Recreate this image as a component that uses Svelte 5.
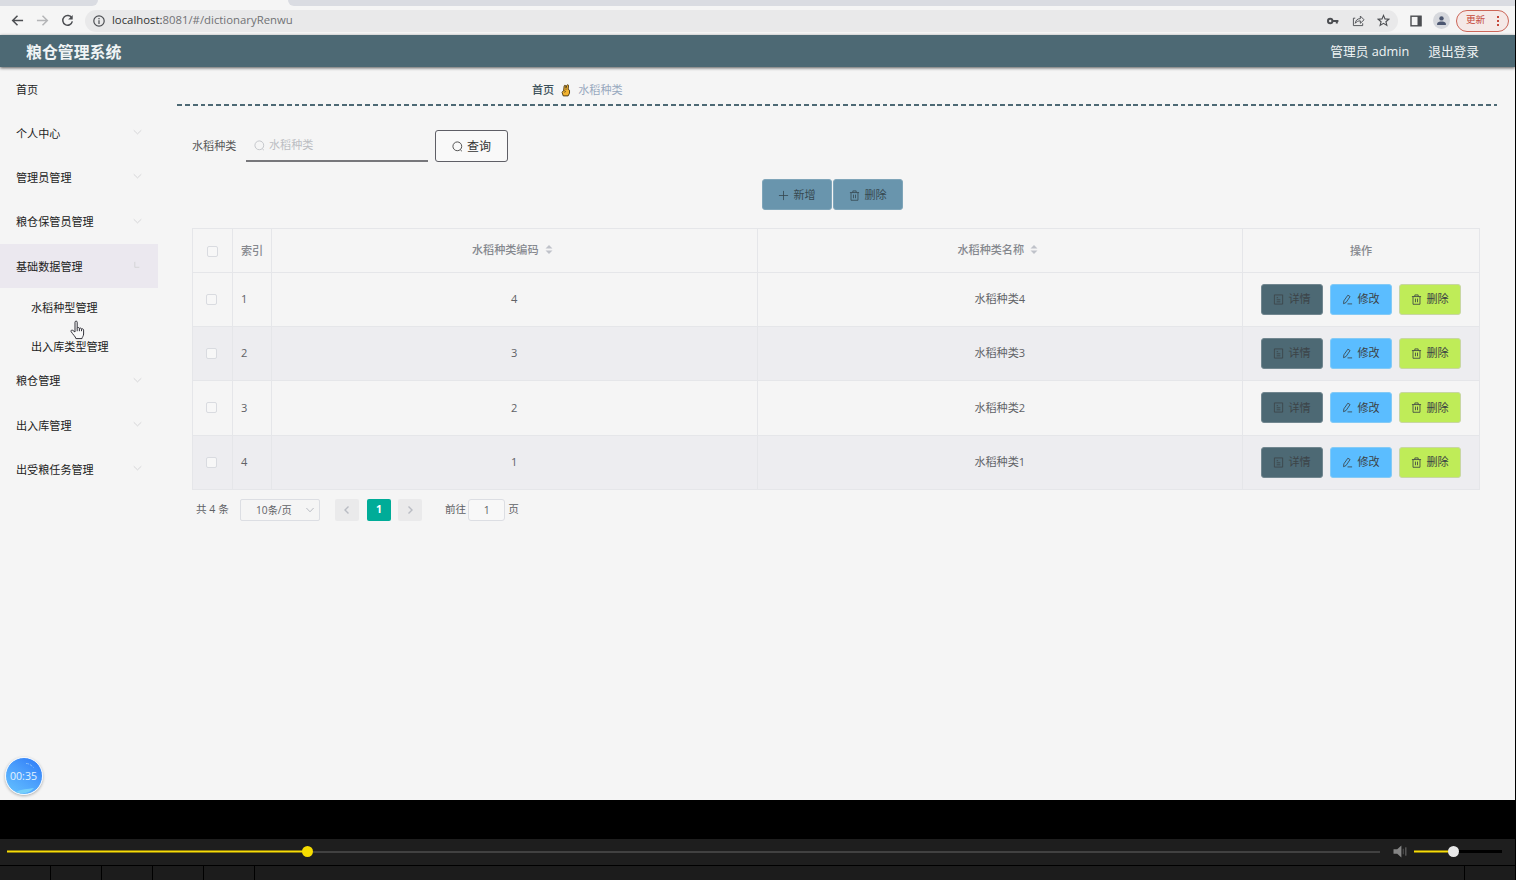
<script lang="ts">
  type MenuItem = { title: string; children?: string[]; leaf?: boolean };

  const menus: MenuItem[] = [
    { title: '首页', leaf: true },
    { title: '个人中心' },
    { title: '管理员管理' },
    { title: '粮仓保管员管理' },
    { title: '基础数据管理', children: ['水稻种型管理', '出入库类型管理'] },
    { title: '粮仓管理' },
    { title: '出入库管理' },
    { title: '出受粮任务管理' }
  ];

  const rows = [
    { code: 4, name: '水稻种类4' },
    { code: 3, name: '水稻种类3' },
    { code: 2, name: '水稻种类2' },
    { code: 1, name: '水稻种类1' }
  ];

  let active = $state('基础数据管理');
  let keyword = $state('');
  let jumpPage = $state('1');
</script>

{#snippet trash()}
  <svg class="icon" viewBox="0 0 12 12"><path d="M1 2.8h10M4.2 2.8V1h3.6v1.8M2.2 2.8v8.4h7.6V2.8M4.9 5v4M7.1 5v4" /></svg>
{/snippet}

{#snippet search()}
  <svg class="icon" viewBox="0 0 12 12"><circle cx="5.8" cy="5.8" r="4.8" /><path d="M9 9.5l1.8 1.6" /></svg>
{/snippet}

<div class="screen">
  <div class="page">
    <div class="tabs">
      <div class="tab left"></div>
      <div class="tab right"></div>
    </div>
    <div class="toolbar">
      <svg class="nav" viewBox="0 0 14 14"><path d="M13 7H2M7 1.8L1.8 7L7 12.2" /></svg>
      <svg class="nav dim" viewBox="0 0 14 14"><path d="M1 7h11M7 1.8L12.2 7L7 12.2" /></svg>
      <svg class="nav" viewBox="0 0 14 14"><path d="M11.6 4.2A5.2 5.2 0 1 0 12.2 8" /><path class="fill" d="M12.6 1v5H7.7z" /></svg>
      <div class="address">
        <svg class="info" viewBox="0 0 12 12"><circle cx="6" cy="6" r="5.2" /><path d="M6 5.3v3.6M6 2.9v1.3" /></svg>
        <span class="url"><b>localhost:</b>8081/#/dictionaryRenwu</span>
        <svg class="key" viewBox="0 0 12 12"><circle cx="3.2" cy="6" r="2.2" /><path d="M5.4 6h6M9.8 6v2.6" /></svg>
        <svg class="share" viewBox="0 0 14 14"><path d="M3.5 4.5H1.5v8h10V10M3.5 10c.5-3.5 2.5-5 5.500-5V2.200l4 4-4 3.800V7.400c-2.400 0-4 .6-5.500 2.600z" /></svg>
        <svg class="star" viewBox="0 0 14 14"><path d="M7 1.5l1.600 3.800 4.100.3-3.100 2.700 1 4L7 10.100l-3.600 2.200 1-4-3.100-2.700 4.100-.3z" /></svg>
      </div>
      <svg class="panel" viewBox="0 0 12 12"><rect x="1" y="1.2" width="10" height="9.6" /><path class="fill" d="M7.5 1h3.8v10H7.5z" /></svg>
      <div class="avatar">
        <svg viewBox="0 0 12 12"><circle cx="6" cy="3.7" r="2.4" /><path d="M1.2 10.8V9.6C1.2 7.8 4 7.2 6 7.2s4.8.6 4.8 2.4v1.2z" /></svg>
      </div>
      <div class="update"><span>更新</span><i></i></div>
    </div>

    <header>
      <h1>粮仓管理系统</h1>
      <span class="user">管理员 admin</span>
      <span class="logout">退出登录</span>
    </header>

    <div class="body">
      <aside>
        {#each menus as menu}
          <div class="menu" class:active={menu.title === active}>
            <span>{menu.title}</span>
            {#if menu.title === active}
              <svg class="caret" viewBox="0 0 10 10"><path d="M2 1v6h5" /></svg>
            {:else if !menu.leaf}
              <svg class="caret" viewBox="0 0 10 10"><path d="M.8 2.500L5 6.500l4.200-4" /></svg>
            {/if}
          </div>
          {#if menu.children}
            <div class="submenu">
              {#each menu.children as child}
                <div class="sub">{child}</div>
              {/each}
            </div>
          {/if}
        {/each}
      </aside>

      <main>
        <div class="breadcrumb">
          <span class="home">首页</span>
          <svg viewBox="0 0 12 14"><path d="M3 12.800L1.800 9 3.500 6.800 4 2.200c.2-1.200 1.600-1.200 1.700 0l.3 2 .9-2.800c.4-1 2-.7 1.800.5L8.300 5.800l1.500.9v3.100l-1.500 3z" /><path class="line" d="M3.600 7l2 1-1.200 1.400M6 4.500v2" /></svg>
          <span class="current">水稻种类</span>
        </div>

        <div class="filter">
          <label for="kw">水稻种类</label>
          <div class="field">
            {@render search()}
            <input id="kw" placeholder="水稻种类" bind:value={keyword} />
          </div>
          <button class="query">{@render search()}<span>查询</span></button>
        </div>

        <div class="actions">
          <button><svg class="icon" viewBox="0 0 12 12"><path d="M6 1v10M1 6h10" /></svg><span>新增</span></button>
          <button>{@render trash()}<span>删除</span></button>
        </div>

        <table>
          <colgroup>
            <col class="c-check" /><col class="c-index" /><col /><col /><col class="c-ops" />
          </colgroup>
          <thead>
            <tr>
              <th class="check"><i class="box"></i></th>
              <th class="index">索引</th>
              {#each ['水稻种类编码', '水稻种类名称'] as label}
                <th><div class="sortable">{label}<svg viewBox="0 0 8 12"><path d="M4 1l3.8 4H.2zM4 11L.2 7h7.6z" /></svg></div></th>
              {/each}
              <th>操作</th>
            </tr>
          </thead>
          <tbody>
            {#each rows as row, i}
              <tr>
                <td class="check"><i class="box"></i></td>
                <td class="index">{i + 1}</td>
                <td>{row.code}</td>
                <td>{row.name}</td>
                <td>
                  <div class="ops">
                    <button class="detail"><svg class="icon" viewBox="0 0 12 12"><path d="M1.5 1h9v10h-9zM4 4h1.5M4 6.3h4M4 8.5h4" /></svg><span>详情</span></button>
                    <button class="edit"><svg class="icon" viewBox="0 0 12 12"><path d="M2 7.5L6.4 1.3l2.4 1.5L4.4 9.3l-2.7 1.3zM6 10.8h5" /></svg><span>修改</span></button>
                    <button class="remove">{@render trash()}<span>删除</span></button>
                  </div>
                </td>
              </tr>
            {/each}
          </tbody>
        </table>

        <div class="pagination">
          <span class="total">共 4 条</span>
          <div class="sizes">10条/页<svg viewBox="0 0 10 10"><path d="M1.4 3L5 6.8 8.6 3" /></svg></div>
          <button class="arrow"><svg viewBox="0 0 10 10"><path d="M6.5 1.5L3 5l3.5 3.5" /></svg></button>
          <button class="num">1</button>
          <button class="arrow"><svg viewBox="0 0 10 10"><path d="M3.5 1.5L7 5 3.5 8.5" /></svg></button>
          <span class="jump">前往</span>
          <input bind:value={jumpPage} />
          <span>页</span>
        </div>
      </main>
    </div>

    <svg class="pointer" viewBox="0 0 15 20"><path d="M5 12V2.2C5 .7 7.2.7 7.2 2.2v6c.2-1 2.1-.9 2.2.3.4-.8 2-.6 2.1.6.5-.7 2.1-.3 2.1 1V14c0 2-1.4 3-1.6 4.6H5.9C5.6 16.6 2.6 14.2 1.1 11.6c-.6-1.2.8-2 1.7-1.2z" /><path d="M7.2 8.2v3M9.4 8.5v2.7M11.5 9.2v2" /></svg>

    <div class="timer">
      <svg viewBox="0 0 36 36"><path class="wave" d="M10 34c5-3 12-3 18-4-4 5-12 7-18 4z" /><path class="glint" d="M20 5.5c3 0 5 1.500 7.500 4" /></svg>
      <span>00:35</span>
    </div>
  </div>

  <div class="player">
    <div class="progress"><div class="played"></div><i class="knob"></i></div>
    <svg class="speaker" viewBox="0 0 14 14"><path class="cone" d="M0 4.5h4L8.5.5v13L4 9.5H0z" /><path d="M10.5 4v6" /><path class="far" d="M13.3 2.5v9" /></svg>
    <div class="volume"><div class="level"></div><i class="knob"></i></div>
  </div>
  <div class="strip">
    {#each Array(5) as _}
      <i></i>
    {/each}
    <i class="last"></i>
  </div>
</div>

<style>
  :global(body) {
    margin: 0;
    background: #000;
  }

  * {
    box-sizing: border-box;
  }

  .screen {
    width: 1516px;
    height: 880px;
    padding-right: 1px;
    overflow: hidden;
    background: #000;
    color: #606266;
    font: 11.1px/1.3 'Open Sans', 'Noto Sans CJK SC', sans-serif;
  }

  svg {
    display: block;
    flex: none;
    fill: none;
    stroke: currentColor;
    stroke-width: 1;
  }

  button,
  input {
    margin: 0;
    padding: 0;
    border: 0;
    color: inherit;
    font: inherit;
  }

  .page {
    position: relative;
    height: 800px;
    background: #f5f5f5;
  }

  /* browser chrome */
  .tabs {
    display: flex;
    justify-content: space-between;
    height: 6px;
  }

  .tab {
    background: #dadce2;
  }

  .left {
    width: 98px;
    border-bottom-right-radius: 6px;
  }

  .right {
    width: 1227px;
    border-bottom-left-radius: 6px;
  }

  .toolbar {
    display: flex;
    align-items: center;
    height: 29px;
    padding: 0 6px 0 11px;
    color: #4c4e52;
  }

  .nav {
    width: 13px;
    height: 13px;
    margin-right: 12px;
    stroke-width: 1.6;
  }

  .dim {
    color: #b4b5b7;
  }

  .fill {
    fill: currentColor;
    stroke: none;
  }

  .address {
    display: flex;
    flex: 1;
    align-items: center;
    height: 22px;
    margin: 0 12px 0 -1px;
    padding: 0 8px;
    border-radius: 11px;
    background: #e9e9ea;
  }

  .info {
    width: 12px;
    height: 12px;
    margin-right: 7px;
    stroke-width: 1.2;
  }

  .url {
    flex: 1;
    color: #717275;
    font-size: 11.35px;
  }

  .url b {
    color: #333;
    font-weight: 400;
  }

  .key {
    width: 12px;
    height: 12px;
    margin-right: 13px;
    stroke-width: 2;
  }

  .share,
  .star {
    width: 13px;
    height: 13px;
  }

  .share {
    margin-right: 12px;
  }

  .star {
    stroke-width: 1.2;
  }

  .panel {
    width: 12px;
    height: 12px;
    margin-right: 11px;
    stroke-width: 1.4;
  }

  .avatar {
    display: grid;
    place-items: center;
    width: 17px;
    height: 17px;
    margin-right: 6px;
    border-radius: 50%;
    background: #d6d8dd;
    color: #4b5670;
  }

  .avatar svg {
    width: 11px;
    height: 11px;
    fill: currentColor;
    stroke: none;
  }

  .update {
    display: flex;
    align-items: center;
    justify-content: space-between;
    width: 53px;
    height: 22px;
    padding: 0 9px;
    border: 1px solid #cc6658;
    border-radius: 11px;
    background: #f5e9e7;
    color: #c5483a;
    font-size: 9.6px;
  }

  .update i {
    width: 2px;
    height: 2px;
    background: #c5483a;
    box-shadow: 0 -4px #c5483a, 0 4px #c5483a;
  }

  header {
    position: relative;
    display: flex;
    align-items: center;
    height: 32px;
    padding: 0 36px 0 26px;
    background: #4d6974;
    box-shadow: 0 1px 3px rgba(0, 0, 0, 0.65);
    color: #f0f4f5;
    font-size: 12.7px;
  }

  h1 {
    flex: 1;
    margin: 0;
    padding-top: 2px;
    font-size: 15.9px;
    font-weight: 700;
  }

  .user {
    margin-right: 19px;
  }

  .body {
    display: flex;
  }

  /* side menu */
  aside {
    flex: none;
    width: 158px;
    color: #222;
  }

  .menu {
    display: flex;
    align-items: center;
    justify-content: space-between;
    height: 44.2px;
    padding: 2px 16px 0;
  }

  .menu.active {
    background: #ebe8ef;
  }

  .caret {
    width: 9px;
    height: 9px;
    margin-bottom: 3px;
    color: #d2d2d5;
  }

  .submenu {
    height: 70.6px;
  }

  .sub {
    height: 39.5px;
    padding-left: 31px;
    line-height: 40px;
  }

  /* content */
  main {
    flex: 1;
    min-width: 0;
    padding: 0 35px 0 34px;
  }

  .breadcrumb {
    display: flex;
    align-items: center;
    width: 1320px;
    height: 39px;
    margin-left: -15px;
    padding: 7px 0 0 355px;
    background: repeating-linear-gradient(90deg, #4d6974 0 4.9px, transparent 4.9px 7.84px) left bottom / 100% 2px no-repeat;
  }

  .home {
    color: #3c505a;
    font-weight: 500;
  }

  .breadcrumb svg {
    width: 12px;
    height: 13px;
    margin: 0 6px;
    fill: #f3b32f;
    stroke: #493814;
  }

  .breadcrumb .line {
    fill: none;
    stroke-width: 0.7;
  }

  .current {
    color: #97a8be;
  }

  .filter {
    display: flex;
    align-items: center;
    height: 32px;
    margin-top: 24px;
  }

  label {
    width: 54px;
    color: #555;
  }

  .field {
    display: flex;
    align-items: center;
    width: 182px;
    height: 32px;
    margin-right: 7px;
    padding: 0 8px;
    border-bottom: 2px solid #77777b;
    color: #bbbdc2;
  }

  .field input {
    width: 140px;
    margin-left: 4px;
    outline: 0;
    background: transparent;
  }

  input::placeholder {
    color: #bbbdc2;
    opacity: 1;
  }

  .icon {
    width: 11px;
    height: 11px;
    stroke-width: 0.9;
  }

  .query {
    display: flex;
    align-items: center;
    justify-content: center;
    gap: 4px;
    width: 73px;
    height: 32px;
    padding-top: 1px;
    border: 1px solid #5f5f66;
    border-radius: 3px;
    background: #f9f9f9;
    color: #333;
    font-size: 12px;
  }

  .actions {
    display: flex;
    justify-content: center;
    gap: 1px;
    margin: 17px 0 18px;
    padding-right: 7px;
  }

  .actions button,
  .ops button {
    display: flex;
    align-items: center;
    justify-content: center;
    gap: 4px;
    height: 31px;
    border-radius: 3px;
  }

  .actions button {
    width: 70px;
    padding-top: 1px;
    border: 1px solid #7fa5b9;
    background: #6995ad;
    color: #374951;
  }

  table {
    width: 1288px;
    border: 1px solid #e5e6e9;
    border-width: 1px 0 0 1px;
    border-spacing: 0;
    table-layout: fixed;
  }

  .c-check {
    width: 40px;
  }

  .c-index {
    width: 39px;
  }

  .c-ops {
    width: 237px;
  }

  th,
  td {
    padding: 0;
    border: 1px solid #e5e6e9;
    border-width: 0 1px 1px 0;
    text-align: center;
  }

  th {
    height: 43.5px;
    padding-top: 2px;
    color: #85888e;
    font-weight: 500;
  }

  td {
    height: 54.35px;
  }

  tbody tr:nth-child(even) {
    background: #ededf0;
  }

  td.check {
    padding-right: 3px;
  }

  .index {
    padding-left: 8px;
    text-align: left;
  }

  .box {
    display: block;
    width: 11px;
    height: 11px;
    margin: 0 auto;
    border: 1px solid #d9dbe0;
    border-radius: 2px;
    background: #f7f7f7;
  }

  .sortable {
    display: flex;
    align-items: center;
    justify-content: center;
    gap: 6px;
    padding-bottom: 3px;
    padding-right: 4px;
  }

  .sortable svg {
    width: 8px;
    height: 11px;
    fill: #bfc2c9;
    stroke: none;
  }

  .ops {
    display: flex;
    justify-content: center;
    gap: 7px;
  }

  .ops button {
    width: 62px;
    border: 1px solid #d8dde0;
    color: #3b4144;
  }

  .ops .detail {
    border-color: #71868f;
    background: #4d6974;
    color: #3c4448;
  }

  .ops .edit {
    border-color: #83caf6;
    background: #5bbdff;
  }

  .ops .remove {
    border-color: #c8d7a2;
    background: #bfec58;
  }

  .pagination {
    display: flex;
    align-items: center;
    height: 23px;
    margin-top: 9px;
    padding-left: 4px;
    font-size: 10.6px;
  }

  .pagination svg {
    width: 10px;
    height: 10px;
    color: #b9bcc3;
  }

  .total {
    width: 44px;
  }

  .sizes {
    display: flex;
    align-items: center;
    justify-content: space-between;
    width: 80px;
    height: 22px;
    margin-right: 15px;
    padding: 0 4px 0 15px;
    border: 1px solid #dcdee3;
    border-radius: 2px;
    font-size: 10.2px;
  }

  .pagination button {
    display: grid;
    place-items: center;
    width: 24px;
    height: 22px;
    margin-right: 8px;
    border-radius: 2px;
    background: #eaeaeb;
  }

  .arrow svg {
    stroke-width: 1.4;
  }

  .pagination .num {
    margin-right: 7px;
    background: #00ac98;
    color: #fff;
    font-weight: 700;
  }

  .jump {
    margin: 0 2px 0 15px;
  }

  .pagination input {
    width: 37px;
    height: 22px;
    margin-right: 3px;
    border: 1px solid #dcdee3;
    border-radius: 3px;
    background: #f8f8f8;
    text-align: center;
  }

  /* overlays */
  .pointer {
    position: absolute;
    left: 70px;
    top: 320px;
    width: 15px;
    height: 20px;
    fill: #f8f8f8;
    stroke: #33333b;
  }

  .timer {
    position: absolute;
    left: 5px;
    top: 757px;
    display: grid;
    place-items: center;
    width: 38px;
    height: 38px;
    border: 1px solid #f2f8ff;
    border-radius: 50%;
    background: linear-gradient(35deg, #65c3ff, #4a9dfc 55%, #2c78f6);
    box-shadow: 0 1px 3px rgba(0, 0, 0, 0.3);
    color: #e4f3ff;
    font-size: 10.6px;
  }

  .timer svg,
  .timer span {
    grid-area: 1 / 1;
  }

  .timer span {
    padding: 2px 1px 0 0;
  }

  .timer svg {
    width: 36px;
    height: 36px;
  }

  .wave {
    fill: #75cffa;
    stroke: none;
  }

  .glint {
    stroke: #85bdfb;
    stroke-dasharray: 3 1;
  }

  /* video player */
  .player {
    display: flex;
    align-items: center;
    height: 26px;
    margin-top: 39px;
    padding: 0 13px 1px 7px;
    background: #1e1e1e;
  }

  .progress,
  .volume {
    display: flex;
    align-items: center;
    height: 11px;
  }

  .progress {
    width: 1373px;
    margin-right: 13px;
    background: linear-gradient(#414141, #414141) center / 100% 2px no-repeat;
  }

  .played,
  .level {
    height: 3px;
    border: solid #8d7d0c;
    border-width: 1px 0;
    background: #f7dd08;
  }

  .played {
    width: 300px;
  }

  .knob {
    width: 11px;
    height: 11px;
    margin-left: -5px;
    border-radius: 50%;
    background: #f5dc00;
  }

  .speaker {
    width: 14px;
    height: 13px;
    margin-right: 7px;
    color: #555;
  }

  .cone {
    fill: #858585;
    stroke: none;
  }

  .far {
    stroke: #777;
  }

  .volume {
    width: 88px;
    background: linear-gradient(#000, #000) center / 100% 3px no-repeat;
  }

  .level {
    width: 39px;
  }

  .volume .knob {
    background: #e8e8e8;
  }

  .strip {
    display: flex;
    height: 14px;
    margin-top: 1px;
    background: #1c1c1c;
  }

  .strip i {
    width: 51px;
    border-right: 1px solid #000;
  }

  .strip .last {
    width: 1210px;
  }
</style>
